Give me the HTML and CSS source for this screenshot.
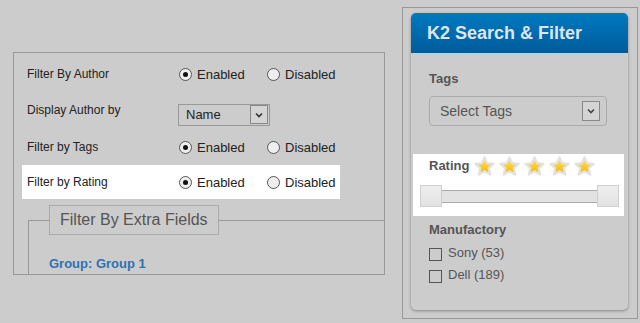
FILE: index.html
```html
<!DOCTYPE html>
<html lang="en">
    <head>
        <title>K2 Search &amp; Filter settings</title>
        <link rel="stylesheet" href="styles.css">
    </head>
    <body>
        <svg class="defs" width="0" height="0">
            <defs>
                <linearGradient id="gold" x1="0" y1="0" x2="0" y2="1">
                    <stop offset="0" stop-color="#FFE45C"/>
                    <stop offset="1" stop-color="#F5B400"/>
                </linearGradient>
            </defs>
        </svg>
        <div class="settings">
            <div class="row">
                <span class="label">Filter By Author</span>
                <span class="opt"><span class="radio on"></span>Enabled</span>
                <span class="opt"><span class="radio"></span>Disabled</span>
            </div>
            <div class="row row-select">
                <span class="label">Display Author by</span>
                <span class="select small">Name<span class="arrow"><svg width="8" height="6" viewBox="0 0 8 6"><path d="M1 1.5 L4 4.5 L7 1.5" fill="none" stroke="#333" stroke-width="1.6"/></svg></span></span>
            </div>
            <div class="row row-tags">
                <span class="label">Filter by Tags</span>
                <span class="opt"><span class="radio on"></span>Enabled</span>
                <span class="opt"><span class="radio"></span>Disabled</span>
            </div>
            <div class="row highlight">
                <span class="label">Filter by Rating</span>
                <span class="opt"><span class="radio on"></span>Enabled</span>
                <span class="opt"><span class="radio"></span>Disabled</span>
            </div>
            <fieldset class="extra">
                <legend>Filter By Extra Fields</legend>
                <div class="group">Group: Group 1</div>
            </fieldset>
        </div>

        <div class="module-wrap">
            <div class="module">
                <div class="module-title">K2 Search &amp; Filter</div>
                <div class="module-body">
                    <div class="field-title">Tags</div>
                    <div class="select big">Select Tags<span class="arrow"><svg width="8" height="6" viewBox="0 0 8 6"><path d="M1 1.5 L4 4.5 L7 1.5" fill="none" stroke="#444" stroke-width="1.6"/></svg></span></div>
                </div>
                <div class="rating">
                    <div class="rating-head">
                        <span class="field-title">Rating</span>
                        <span class="stars">
                            <svg class="star" viewBox="0 0 24 24"><path d="M12 2.5 L14.8 8.6 L21.4 9.3 L16.4 13.8 L17.9 20.4 L12 17 L6.1 20.4 L7.6 13.8 L2.6 9.3 L9.2 8.6 Z"/></svg>
                            <svg class="star" viewBox="0 0 24 24"><path d="M12 2.5 L14.8 8.6 L21.4 9.3 L16.4 13.8 L17.9 20.4 L12 17 L6.1 20.4 L7.6 13.8 L2.6 9.3 L9.2 8.6 Z"/></svg>
                            <svg class="star" viewBox="0 0 24 24"><path d="M12 2.5 L14.8 8.6 L21.4 9.3 L16.4 13.8 L17.9 20.4 L12 17 L6.1 20.4 L7.6 13.8 L2.6 9.3 L9.2 8.6 Z"/></svg>
                            <svg class="star" viewBox="0 0 24 24"><path d="M12 2.5 L14.8 8.6 L21.4 9.3 L16.4 13.8 L17.9 20.4 L12 17 L6.1 20.4 L7.6 13.8 L2.6 9.3 L9.2 8.6 Z"/></svg>
                            <svg class="star" viewBox="0 0 24 24"><path d="M12 2.5 L14.8 8.6 L21.4 9.3 L16.4 13.8 L17.9 20.4 L12 17 L6.1 20.4 L7.6 13.8 L2.6 9.3 L9.2 8.6 Z"/></svg>
                        </span>
                    </div>
                    <div class="slider">
                        <span class="handle"></span>
                        <span class="track"></span>
                        <span class="handle"></span>
                    </div>
                </div>
                <div class="module-body">
                    <div class="field-title manu">Manufactory</div>
                    <div class="check"><span class="box"></span>Sony (53)</div>
                    <div class="check"><span class="box"></span>Dell (189)</div>
                </div>
            </div>
        </div>
    </body>
</html>
```

FILE: styles.css
```css
body {
    margin: 0;
    background-color: #CCC;
    color: #222;
    font-family: "Liberation Sans", Arial, sans-serif;
    display: flex;
    align-items: flex-start;
    height: 323px;
    overflow: hidden;
}
.defs {
    position: absolute;
}

/* left: settings panel */
.settings {
    margin: 52px 0 0 13px;
    width: 372px;
    height: 223px;
    box-sizing: border-box;
    border: 1px solid #999;
    overflow: hidden;
}
.row {
    display: flex;
    align-items: center;
    height: 34px;
    margin: 4px 0 0 8px;
    width: 318px;
    padding-left: 5px;
    box-sizing: border-box;
    font-size: 13px;
}
.row-select {
    height: 38px;
    margin-top: 0;
}
.row-tags {
    height: 36px;
    margin-top: 0;
}
.highlight {
    margin-top: 0;
    background-color: #FFF;
}
.label {
    flex-shrink: 0;
    width: 151px;
    font-size: 12px;
}
.opt {
    flex-shrink: 0;
    display: flex;
    align-items: center;
    width: 88px;
}
.radio {
    width: 11px;
    height: 11px;
    border: 1px solid #555;
    border-radius: 50%;
    background: #EEE;
    margin: 0 5px 0 1px;
    position: relative;
    box-sizing: content-box;
}
.radio.on::after {
    content: "";
    position: absolute;
    left: 3px;
    top: 3px;
    width: 5px;
    height: 5px;
    border-radius: 50%;
    background: #111;
}
.select {
    display: flex;
    align-items: center;
    justify-content: space-between;
    box-sizing: border-box;
    border: 1px solid #999;
    color: #222;
}
.select.small {
    flex-shrink: 0;
    width: 92px;
    height: 22px;
    margin-top: 9px;
    padding: 0 1px 0 7px;
    font-size: 13px;
}
.arrow {
    display: flex;
    align-items: center;
    justify-content: center;
    width: 16px;
    height: 17px;
    border: 1px solid #888;
    background: #D4D4D4;
}
.extra {
    margin: 6px 0 0 14px;
    padding: 0 0 0 20px;
    border: none;
    border-top: 1px solid #999;
    border-left: 1px solid #999;
    height: 80px;
}
.extra legend {
    padding: 0 10px;
    height: 30px;
    line-height: 28px;
    box-sizing: border-box;
    border: 1px solid #AAA;
    font-size: 16px;
    color: #555;
}
.group {
    margin-top: 21px;
    font-size: 13px;
    font-weight: bold;
    color: #2E72B2;
}

/* right: module */
.module-wrap {
    margin: 7px 0 0 17px;
    width: 236px;
    height: 312px;
    box-sizing: border-box;
    border: 1px solid #999;
    padding: 5px 8px;
}
.module {
    width: 217px;
    height: 297px;
    border-radius: 5px;
    box-shadow: 0 1px 3px rgba(0, 0, 0, 0.35);
    overflow: hidden;
    color: #555;
}
.module-title {
    height: 40px;
    line-height: 40px;
    padding-left: 16px;
    background: linear-gradient(#0079C1, #005C9A);
    color: #DDE6EE;
    font-size: 18px;
    font-weight: bold;
}
.module-body {
    padding-left: 18px;
}
.field-title {
    font-size: 13px;
    font-weight: bold;
    line-height: 16px;
}
.module-body > .field-title {
    margin-top: 18px;
}
.select.big {
    margin-top: 9px;
    width: 178px;
    height: 30px;
    border-color: #AAA;
    border-radius: 4px;
    padding: 0 6px 0 10px;
    font-size: 14px;
    color: #555;
}
.select.big .arrow {
    width: 16px;
    height: 18px;
}
.rating {
    margin: 28px 0 0 2px;
    width: 211px;
    height: 62px;
    background: #FFF;
}
.rating-head {
    display: flex;
    align-items: center;
    height: 22px;
    padding: 1px 0 0 16px;
}
.stars {
    display: flex;
    gap: 2px;
    margin-left: 4px;
}
.star {
    width: 23px;
    height: 23px;
}
.star path {
    fill: url(#gold);
    stroke: #E2E2E2;
    stroke-width: 2.4;
    stroke-linejoin: round;
}
.slider {
    display: flex;
    align-items: center;
    margin: 8px 0 0 7px;
    width: 199px;
}
.handle {
    width: 20px;
    height: 20px;
    border: 1px solid #CFCFCF;
    background: linear-gradient(#EEE, #E2E2E2);
}
.track {
    flex: 1;
    height: 11px;
    border-top: 1px solid #AAA;
    border-bottom: 1px solid #AAA;
    background: #E2E2E2;
}
.field-title.manu {
    margin-top: 6px;
}
.check {
    display: flex;
    align-items: center;
    margin-top: 6px;
    height: 17px;
    font-size: 13px;
}
.check + .check {
    margin-top: 5px;
}
.box {
    width: 11px;
    height: 11px;
    border: 1px solid #555;
    margin: 3px 6px 0 0;
}
```
